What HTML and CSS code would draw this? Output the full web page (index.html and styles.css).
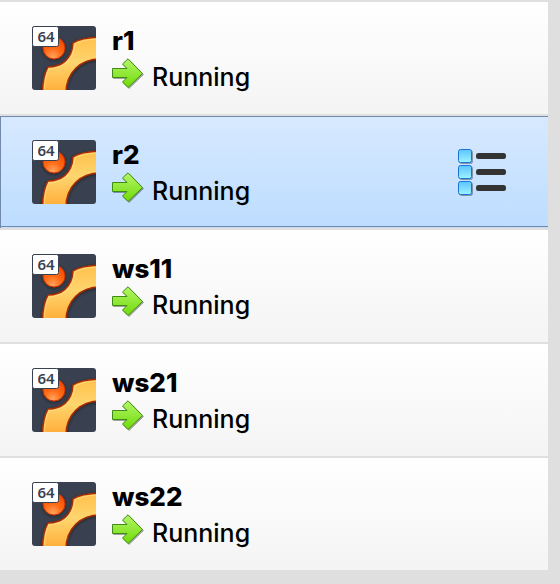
FILE: index.html
```html
<!DOCTYPE html>
<html lang="en">
<head>
<meta charset="utf-8">
<title>Machines</title>
<link rel="stylesheet" href="styles.css">
</head>
<body>
<svg class="defs" aria-hidden="true">
  <defs>
    <linearGradient id="band" x1="0" y1="0" x2="0" y2="1"><stop offset="0" stop-color="#ffc04a"/><stop offset=".45" stop-color="#ffd56e"/><stop offset="1" stop-color="#ffac38"/></linearGradient>
    <radialGradient id="ball" cx=".45" cy=".9" r=".8"><stop offset="0" stop-color="#ffa45c"/><stop offset=".5" stop-color="#ff6a16"/><stop offset="1" stop-color="#f84c00"/></radialGradient>
    <linearGradient id="green" x1="0" y1="0" x2="0" y2="1"><stop offset="0" stop-color="#b4f567"/><stop offset="1" stop-color="#6fdb08"/></linearGradient>
    <linearGradient id="cyan" x1="0" y1="0" x2="0" y2="1"><stop offset="0" stop-color="#5cc4ff"/><stop offset="1" stop-color="#9df3ff"/></linearGradient>
    <filter id="soft" x="-20%" y="-20%" width="140%" height="140%"><feDropShadow dx="0" dy="1" stdDeviation="1.5" flood-color="#15181f" flood-opacity=".8"/></filter>
    <filter id="drop" x="-20%" y="-20%" width="150%" height="150%"><feDropShadow dx="1" dy="1" stdDeviation=".7" flood-color="#000" flood-opacity=".35"/></filter>
    <clipPath id="tile"><rect width="64" height="64" rx="3"/></clipPath>
    <symbol id="os" viewBox="0 0 64 64">
      <g clip-path="url(#tile)">
        <rect width="64" height="64" fill="#394150"/>
        <circle cx="22" cy="22" r="11" fill="url(#ball)" stroke="#c43200" filter="url(#soft)"/>
        <path d="M10.500 67C10.500 57 12 48 16 41C29 41 40 34 41 17C47 13 56 11.500 68 11V33C48 33 34 47 34 67Z" fill="url(#band)" stroke="#a92c05" stroke-width="1.500" filter="url(#soft)"/>
        <path d="M12.500 67C12.500 57 14 49 17 43C31 42 42 34 43 18C49 15 58 13 68 13" fill="none" stroke="#ffe39a" opacity=".6"/>
      </g>
      <rect x=".5" y=".5" width="26" height="20" rx="2" fill="#fff" stroke="#394150"/>
      <text class="bits" x="14" y="16" text-anchor="middle">64</text>
    </symbol>
    <symbol id="run" viewBox="0 0 34 32">
      <path d="M.5 10.500H15L10.500 6L16 .8L30.500 15.500L16 29.500L10.500 24L15 19.500H.5Z" fill="url(#green)" stroke="#3f8a12" stroke-linejoin="round" filter="url(#drop)"/>
    </symbol>
    <symbol id="menu" viewBox="0 -1 50 50">
      <g fill="url(#cyan)" stroke="#1c74d4" filter="url(#drop)">
        <rect x=".5" y="1.500" width="13" height="13" rx="2"/>
        <rect x=".5" y="17.500" width="13" height="13" rx="2"/>
        <rect x=".5" y="33.500" width="13" height="13" rx="2"/>
      </g>
      <g fill="#333"><rect x="18" y="5" width="30" height="6" rx="2.500"/><rect x="18" y="21" width="30" height="6" rx="2.500"/><rect x="18" y="37" width="30" height="6" rx="2.500"/></g>
    </symbol>
  </defs>
</svg>
<ul class="machines">
  <li class="machine">
    <svg class="os"><use href="#os"/></svg>
    <div class="info"><h2 class="name">r1</h2><p class="state"><svg class="run"><use href="#run"/></svg>Running</p></div>
  </li>
  <li class="machine selected">
    <svg class="os"><use href="#os"/></svg>
    <div class="info"><h2 class="name">r2</h2><p class="state"><svg class="run"><use href="#run"/></svg>Running</p></div>
    <button class="tools" type="button" aria-label="Machine tools"><svg class="menu"><use href="#menu"/></svg></button>
  </li>
  <li class="machine">
    <svg class="os"><use href="#os"/></svg>
    <div class="info"><h2 class="name">ws11</h2><p class="state"><svg class="run"><use href="#run"/></svg>Running</p></div>
  </li>
  <li class="machine">
    <svg class="os"><use href="#os"/></svg>
    <div class="info"><h2 class="name">ws21</h2><p class="state"><svg class="run"><use href="#run"/></svg>Running</p></div>
  </li>
  <li class="machine">
    <svg class="os"><use href="#os"/></svg>
    <div class="info"><h2 class="name">ws22</h2><p class="state"><svg class="run"><use href="#run"/></svg>Running</p></div>
  </li>
</ul>
</body>
</html>
```
FILE: styles.css
```css
* { box-sizing: border-box; }
body {
  margin: 0;
  background: #dfdfdf;
  color: #000;
  font-family: Inter, "Liberation Sans", sans-serif;
}
.defs { position: absolute; width: 0; height: 0; }
.machines {
  display: grid;
  gap: 2px;
  margin: 0;
  padding: 2px 12px 0 0;
  list-style: none;
}
.machine {
  display: flex;
  align-items: center;
  gap: 16px;
  padding: 22px 40px 22px 32px;
  background: linear-gradient(#fff, #f4f4f4);
}
.selected {
  background: linear-gradient(#d7e9ff, #bdddff);
  box-shadow: inset 1px 0 #7189ab, inset 0 1px #7189ab, inset 0 -1px #c5dcf5, inset 0 -2px #7189ab;
}
.os { width: 64px; height: 64px; flex: none; }
.bits {
  font: 600 15px "Noto Sans", sans-serif;
  fill: #394150;
}
.info { flex: 1; height: 68px; }
.name {
  margin: 0;
  font-size: 26px;
  line-height: 34px;
  font-weight: 800;
}
.state {
  display: flex;
  align-items: flex-start;
  gap: 6px;
  margin: 0;
  font-size: 25px;
  line-height: 38px;
  font-weight: 500;
}
.run { width: 34px; height: 32px; flex: none; }
.tools {
  padding: 0;
  border: 0;
  background: none;
}
.menu { display: block; width: 50px; height: 50px; }
```
